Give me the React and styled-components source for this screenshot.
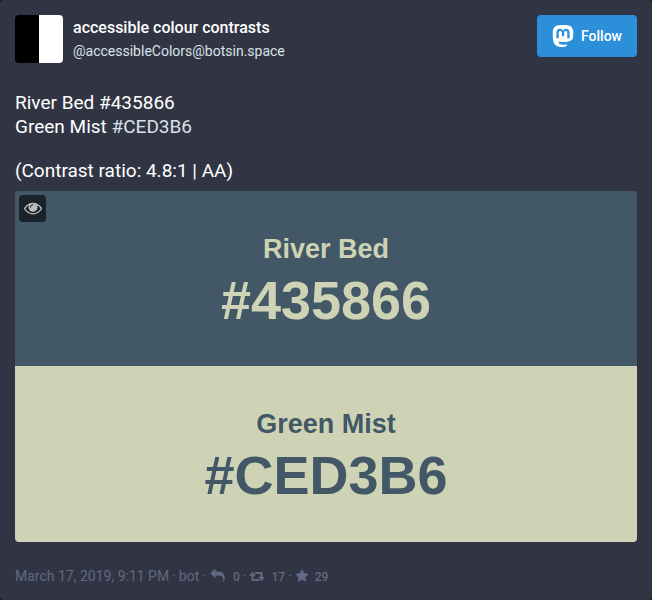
import React from "react";
import styled, { createGlobalStyle } from "styled-components";

const GlobalStyle = createGlobalStyle`
  *, *::before, *::after { box-sizing: border-box; }
  body {
    margin: 0;
    background: #191b22;
    color: #fff;
    font-family: Roboto, sans-serif;
    font-size: 14px;
    line-height: 18px;
  }
  a { color: inherit; text-decoration: none; }
`;

const Status = styled.article`
  min-height: 100vh;
  padding: 15px;
  border-radius: 4px;
  background: #313543;
`;

const Header = styled.header`
  display: flex;
  justify-content: space-between;
  align-items: flex-start;
  margin-bottom: 28px;
`;

const Account = styled.a`
  display: flex;
  gap: 10px;
`;

const Avatar = styled.span`
  flex: none;
  width: 48px;
  height: 48px;
  border-radius: 4px;
  background: linear-gradient(90deg, #000 50%, #fff 50%);
`;

const Names = styled.span`
  display: flex;
  flex-direction: column;
`;

const DisplayName = styled.strong`
  font-size: 16px;
  font-weight: 500;
  line-height: 26px;
`;

const Handle = styled.span`
  color: #d9e1e8;
  line-height: 20px;
`;

const FollowButton = styled.button`
  display: flex;
  align-items: center;
  gap: 7px;
  height: 42px;
  padding: 0 15px;
  border: 0;
  border-radius: 4px;
  background: #2b90d9;
  color: #fff;
  font: 500 14px/18px Roboto, sans-serif;
  cursor: pointer;
`;

const Icon = styled.svg`
  flex: none;
  width: ${(p) => p.$width}px;
  height: ${(p) => p.$height || p.$width}px;
  fill: currentColor;
`;

const Content = styled.div`
  font-size: 19px;
  line-height: 24px;

  p { margin: 0 0 20px; }
  p:last-child { margin-bottom: 0; }
`;

const Hashtag = styled.a`
  && { color: #d9e1e8; }
`;

const Media = styled.div`
  position: relative;
  margin-top: 8px;
  border-radius: 4px;
  overflow: hidden;
`;

const HideButton = styled.button`
  position: absolute;
  top: 4px;
  left: 4px;
  display: flex;
  align-items: center;
  justify-content: center;
  width: 27px;
  height: 27px;
  padding: 0 0 2px;
  border: 0;
  border-radius: 4px;
  background: rgba(0, 0, 0, 0.6);
  color: rgba(255, 255, 255, 0.7);
  cursor: pointer;
`;

const Swatches = styled.figure`
  display: grid;
  grid-template-rows: 175fr 176fr;
  margin: 0;
  aspect-ratio: 622 / 351;
  width: 100%;
`;

const Swatch = styled.div`
  display: flex;
  flex-direction: column;
  align-items: center;
  justify-content: center;
  padding-top: 2px;
  background: ${(p) => p.$background};
  color: ${(p) => p.$color};
  font-family: "Liberation Sans", Arial, sans-serif;
  font-weight: 700;
`;

const SwatchName = styled.span`
  font-size: 27px;
  line-height: 40px;
`;

const SwatchCode = styled.span`
  font-size: 54px;
  line-height: 62px;
`;

const Meta = styled.footer`
  display: flex;
  align-items: center;
  flex-wrap: wrap;
  gap: 3px;
  margin-top: 25px;
  color: #606984;
`;

const Count = styled.span`
  display: inline-flex;
  align-items: center;
  gap: 6px;
`;

const CountValue = styled.span`
  font-size: 12px;
  font-weight: 500;
  line-height: 16px;
  padding-top: 2px;
`;

const MASTODON =
  "M23.193 7.879c0-5.206-3.411-6.732-3.411-6.732C18.062.357 15.108.025 12.041 0h-.076c-3.068.025-6.02.357-7.74 1.147 0 0-3.411 1.526-3.411 6.732 0 1.192-.023 2.618.015 4.129.124 5.092.934 10.109 5.641 11.355 2.17.574 4.034.695 5.535.612 2.722-.15 4.25-.972 4.25-.972l-.09-1.975s-1.945.613-4.129.539c-2.165-.074-4.449-.233-4.799-2.891a5.499 5.499 0 0 1-.048-.745s2.125.52 4.817.643c1.646.075 3.19-.097 4.758-.283 3.007-.359 5.625-2.212 5.954-3.905.517-2.665.475-6.507.475-6.507zm-4.024 6.709h-2.497V8.469c0-1.29-.543-1.944-1.628-1.944-1.2 0-1.802.776-1.802 2.312v3.349h-2.483v-3.35c0-1.536-.602-2.312-1.802-2.312-1.085 0-1.628.655-1.628 1.944v6.119H4.832V8.284c0-1.289.328-2.313.987-3.07.68-.758 1.569-1.146 2.674-1.146 1.278 0 2.246.491 2.886 1.474L12 6.585l.622-1.043c.64-.983 1.608-1.474 2.886-1.474 1.104 0 1.994.388 2.674 1.146.658.757.986 1.781.986 3.07v6.304z";
const EYE =
  "M1664 960q-152-236-381-353 61 104 61 225 0 185-131.5 316.5t-316.5 131.5-316.5-131.5-131.5-316.5q0-121 61-225-229 117-381 353 133 205 333.5 326.5t434.5 121.5 434.5-121.5 333.5-326.5zm-720-384q0-20-14-34t-34-14q-125 0-214.5 89.5t-89.5 214.5q0 20 14 34t34 14 34-14 14-34q0-86 61-147t147-61q20 0 34-14t14-34zm848 384q0 34-20 69-140 230-376.5 368.5t-499.5 138.5-499.5-139-376.5-368q-20-35-20-69t20-69q140-229 376.5-368t499.5-139 499.5 139 376.5 368q20 35 20 69z";
const REPLY =
  "M1792 1120q0 166-127 451-3 7-10.5 24t-13.5 30-13 22q-12 17-28 17-15 0-23.5-10t-8.5-25q0-9 2.5-26.5t2.5-23.5q5-68 5-123 0-112-19.5-200.5t-54-153.5-89-112-117.5-79.5-146.5-48-167-24.5-188.5-7h-224v256q0 26-19 45t-45 19-45-19l-512-512q-19-19-19-45t19-45l512-512q19-19 45-19t45 19 19 45v256h224q713 0 875 403 53 134 53 333z";
const RETWEET =
  "M1280 1504q0 13-9.5 22.5t-22.5 9.5h-960q-8 0-13.5-2t-9-7-5.5-8-3-11.5-1-11.5v-600h-192q-26 0-45-19t-19-45q0-24 15-41l320-384q19-22 49-22t49 22l320 384q15 17 15 41 0 26-19 45t-45 19h-192v384h576q16 0 25 11l160 192q7 11 7 21zm640-416q0 24-15 41l-320 384q-20 23-49 23t-49-23l-320-384q-15-17-15-41 0-26 19-45t45-19h192v-384h-576q-16 0-25-12l-160-192q-7-9-7-20 0-13 9.5-22.5t22.5-9.5h960q8 0 13.5 2t9 7 5.5 8 3 11.5 1 11.5v600h192q26 0 45 19t19 45z";
const STAR =
  "M1728 647q0 22-26 48l-363 354 86 500q1 7 1 20 0 21-10.5 35.5t-30.5 14.5q-19 0-40-12l-449-236-449 236q-22 12-40 12-21 0-31.5-14.5t-10.5-35.5q0-6 2-20l86-500-364-354q-25-27-25-48 0-37 56-46l502-73 225-455q19-41 49-41t49 41l225 455 502 73q56 9 56 46z";

const Glyph = ({ path, box = "0 0 1792 1792", width, height }) => (
  <Icon viewBox={box} $width={width} $height={height} aria-hidden="true">
    <path d={path} />
  </Icon>
);

export default function App() {
  return (
    <>
      <GlobalStyle />
      <Status>
        <Header>
          <Account href="#account">
            <Avatar />
            <Names>
              <DisplayName>accessible colour contrasts</DisplayName>
              <Handle>@accessibleColors@botsin.space</Handle>
            </Names>
          </Account>
          <FollowButton type="button">
            <Glyph path={MASTODON} box="0 0 24 24" width={22} />
            Follow
          </FollowButton>
        </Header>

        <Content>
          <p>
            River Bed #435866
            <br />
            Green Mist <Hashtag href="#CED3B6">#CED3B6</Hashtag>
          </p>
          <p>(Contrast ratio: 4.8:1 | AA)</p>
        </Content>

        <Media>
          <Swatches>
            <Swatch $background="#435866" $color="#ced3b6">
              <SwatchName>River Bed</SwatchName>
              <SwatchCode>#435866</SwatchCode>
            </Swatch>
            <Swatch $background="#ced3b6" $color="#435866">
              <SwatchName>Green Mist</SwatchName>
              <SwatchCode>#CED3B6</SwatchCode>
            </Swatch>
          </Swatches>
          <HideButton type="button" aria-label="Toggle visibility">
            <Glyph path={EYE} width={18} />
          </HideButton>
        </Media>

        <Meta>
          <a href="#status">March 17, 2019, 9:11 PM</a>
          <span>·</span>
          <a href="#bot">bot</a>
          <span>·</span>
          <Count>
            <Glyph path={REPLY} width={18} height={14} />
            <CountValue>0</CountValue>
          </Count>
          <span>·</span>
          <Count>
            <Glyph path={RETWEET} box="0 0 1920 1792" width={16} height={14} />
            <CountValue>17</CountValue>
          </Count>
          <span>·</span>
          <Count>
            <Glyph path={STAR} width={14} />
            <CountValue>29</CountValue>
          </Count>
        </Meta>
      </Status>
    </>
  );
}
